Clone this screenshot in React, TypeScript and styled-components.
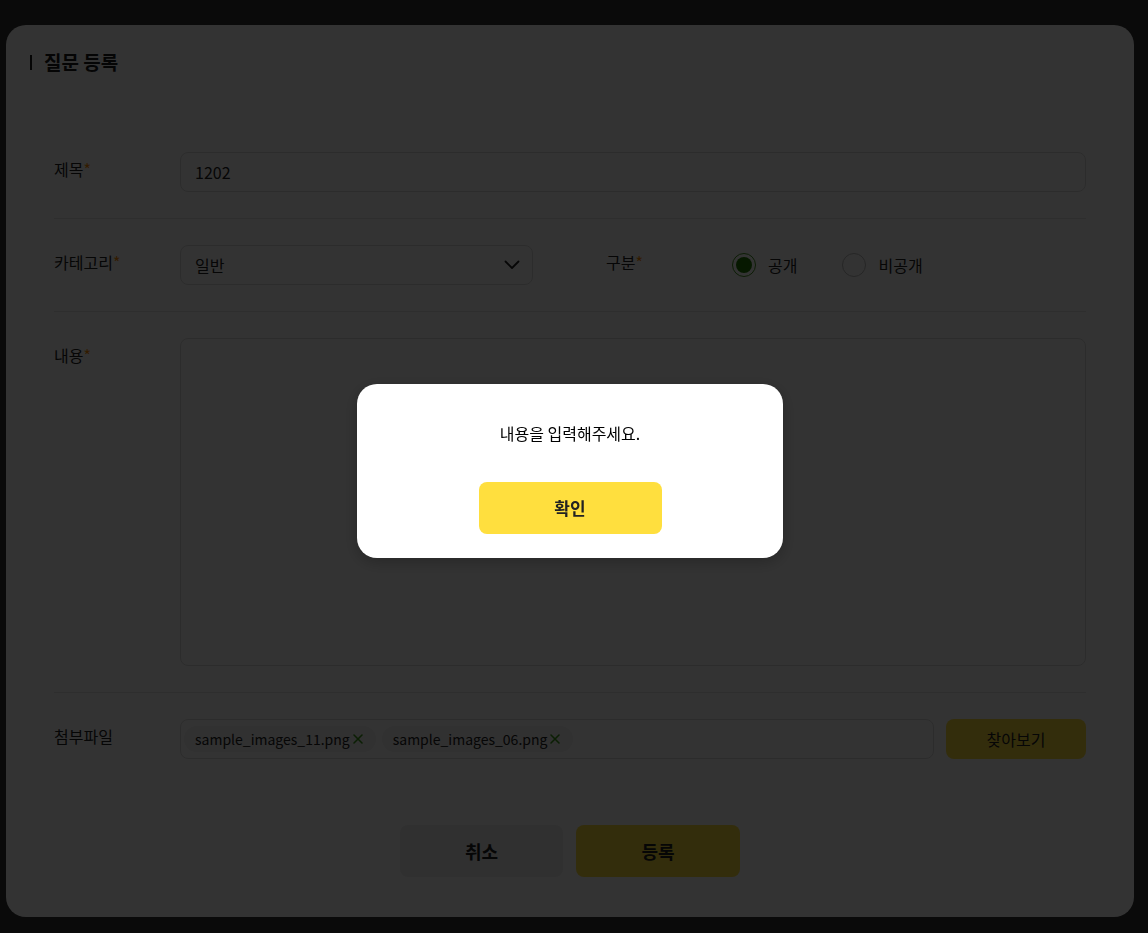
import React from "react";
import styled, { createGlobalStyle } from "styled-components";

const Global = createGlobalStyle`
  html, body { margin: 0; padding: 0; }
  body {
    background: #ffffff;
    font-family: "Noto Sans CJK KR", "Noto Sans", sans-serif;
    color: #222222;
  }
  * { box-sizing: border-box; }
`;

const Backdrop = styled.div<{ $pad: string; $center?: boolean }>`
  position: fixed;
  inset: 0;
  background: rgba(0, 0, 0, 0.8);
  display: flex;
  align-items: ${(p) => (p.$center ? "center" : "flex-start")};
  justify-content: ${(p) => (p.$center ? "center" : "flex-start")};
  padding: ${(p) => p.$pad};
`;

const Card = styled.section`
  width: 1128px;
  height: 892px;
  background: #ffffff;
  border-radius: 20px;
  display: flex;
  flex-direction: column;
  padding: 25px 48px 40px 24px;
`;

const Title = styled.h2`
  margin: 0;
  display: flex;
  align-items: center;
  gap: 12px;
  font-size: 19px;
  font-weight: 700;
  line-height: 24px;
  color: #1a1a1a;
`;

const TitleBar = styled.span`
  display: block;
  width: 2px;
  height: 15px;
  background: #1a1a1a;
`;

const Form = styled.div`
  margin-top: 52px;
  padding-left: 24px;
  display: flex;
  flex-direction: column;
`;

const Row = styled.div<{ $last?: boolean }>`
  padding: 26px 0;
  border-bottom: ${(p) => (p.$last ? "none" : "1px solid #e4e4e4")};
  display: flex;
  align-items: flex-start;
`;

const SplitRow = styled(Row)`
  display: grid;
  grid-template-columns: 479px 480px;
  column-gap: 73px;
`;

const Field = styled.div`
  display: flex;
  align-items: flex-start;
`;

const Label = styled.div`
  width: 126px;
  flex-shrink: 0;
  padding-top: 5px;
  font-size: 16px;
  line-height: 24px;
  color: #222222;
`;

const Req = styled.span`
  color: #ff8a00;
`;

const Input = styled.div`
  flex: 1;
  height: 40px;
  border: 1px solid #dddddd;
  border-radius: 8px;
  padding: 0 14px;
  display: flex;
  align-items: center;
  font-size: 16px;
  color: #222222;
`;

const Select = styled(Input)`
  justify-content: space-between;
  padding-right: 12px;
`;

const TextArea = styled.div`
  flex: 1;
  height: 328px;
  border: 1px solid #dddddd;
  border-radius: 8px;
`;

const RadioGroup = styled.div`
  display: flex;
  align-items: center;
  gap: 45px;
  height: 40px;
`;

const RadioItem = styled.label`
  display: flex;
  align-items: center;
  gap: 12px;
  font-size: 16px;
  color: #222222;
`;

const RadioCircle = styled.span<{ $checked?: boolean }>`
  width: 24px;
  height: 24px;
  border-radius: 50%;
  border: 1px solid ${(p) => (p.$checked ? "#3f8f1c" : "#bbbbbb")};
  display: flex;
  align-items: center;
  justify-content: center;
  &::after {
    content: "";
    width: 16px;
    height: 16px;
    border-radius: 50%;
    background: ${(p) => (p.$checked ? "#1f7a00" : "transparent")};
  }
`;

const FileRow = styled.div`
  flex: 1;
  display: flex;
  gap: 12px;
`;

const FileBox = styled.div`
  flex: 1;
  height: 40px;
  border: 1px solid #dddddd;
  border-radius: 8px;
  padding: 0 3px;
  display: flex;
  align-items: center;
  gap: 6px;
`;

const Chip = styled.span`
  height: 26px;
  border-radius: 13px;
  background: #f3f3f3;
  padding: 0 12px 0 11px;
  display: flex;
  align-items: center;
  gap: 2px;
  font-size: 14px;
  color: #222222;
`;

const Btn = styled.button<{ $variant: "yellow" | "gray"; $w: number; $h: number; $fs: number }>`
  width: ${(p) => p.$w}px;
  height: ${(p) => p.$h}px;
  border: none;
  border-radius: 8px;
  background: ${(p) => (p.$variant === "yellow" ? "#ffdf3e" : "#efefef")};
  color: #222222;
  font-family: inherit;
  font-size: ${(p) => p.$fs}px;
  font-weight: ${(p) => (p.$fs > 16 ? 700 : 400)};
  display: flex;
  align-items: center;
  justify-content: center;
  padding: 0;
  cursor: pointer;
`;

const Actions = styled.div`
  margin-top: auto;
  display: flex;
  justify-content: center;
  gap: 13px;
  padding-left: 24px;
`;

const Alert = styled.div`
  width: 426px;
  height: 174px;
  background: #ffffff;
  border-radius: 20px;
  box-shadow: 0 4px 16px rgba(0, 0, 0, 0.25);
  display: flex;
  flex-direction: column;
  align-items: center;
  padding-top: 38px;
  margin-left: -8px;
  margin-top: 8px;
`;

const AlertText = styled.p`
  margin: 0 0 38px;
  font-size: 16px;
  line-height: 22px;
  color: #000000;
`;

const XIcon = () => (
  <svg width="12" height="12" viewBox="0 0 12 12">
    <path d="M2 2 L10 10 M10 2 L2 10" stroke="#3b9b17" strokeWidth="1.6" strokeLinecap="round" />
  </svg>
);

const Chevron = () => (
  <svg width="16" height="10" viewBox="0 0 16 10">
    <path d="M1.5 1.5 L8 8 L14.5 1.5" stroke="#222" strokeWidth="1.8" fill="none" strokeLinecap="round" strokeLinejoin="round" />
  </svg>
);

export default function App() {
  return (
    <>
      <Global />
      <Backdrop $pad="25px 14px 16px 6px">
        <Card>
          <Title>
            <TitleBar />
            질문 등록
          </Title>
          <Form>
            <Row>
              <Label>
                제목<Req>*</Req>
              </Label>
              <Input>1202</Input>
            </Row>
            <SplitRow>
              <Field>
                <Label>
                  카테고리<Req>*</Req>
                </Label>
                <Select>
                  일반
                  <Chevron />
                </Select>
              </Field>
              <Field>
                <Label>
                  구분<Req>*</Req>
                </Label>
                <RadioGroup>
                  <RadioItem>
                    <RadioCircle $checked />
                    공개
                  </RadioItem>
                  <RadioItem>
                    <RadioCircle />
                    비공개
                  </RadioItem>
                </RadioGroup>
              </Field>
            </SplitRow>
            <Row>
              <Label>
                내용<Req>*</Req>
              </Label>
              <TextArea />
            </Row>
            <Row $last>
              <Label>첨부파일</Label>
              <FileRow>
                <FileBox>
                  <Chip>
                    sample_images_11.png
                    <XIcon />
                  </Chip>
                  <Chip>
                    sample_images_06.png
                    <XIcon />
                  </Chip>
                </FileBox>
                <Btn $variant="yellow" $w={140} $h={40} $fs={16}>
                  찾아보기
                </Btn>
              </FileRow>
            </Row>
          </Form>
          <Actions>
            <Btn $variant="gray" $w={163} $h={52} $fs={18}>
              취소
            </Btn>
            <Btn $variant="yellow" $w={164} $h={52} $fs={18}>
              등록
            </Btn>
          </Actions>
        </Card>
      </Backdrop>
      <Backdrop $pad="0" $center>
        <Alert>
          <AlertText>내용을 입력해주세요.</AlertText>
          <Btn $variant="yellow" $w={183} $h={52} $fs={17}>
            확인
          </Btn>
        </Alert>
      </Backdrop>
    </>
  );
}
